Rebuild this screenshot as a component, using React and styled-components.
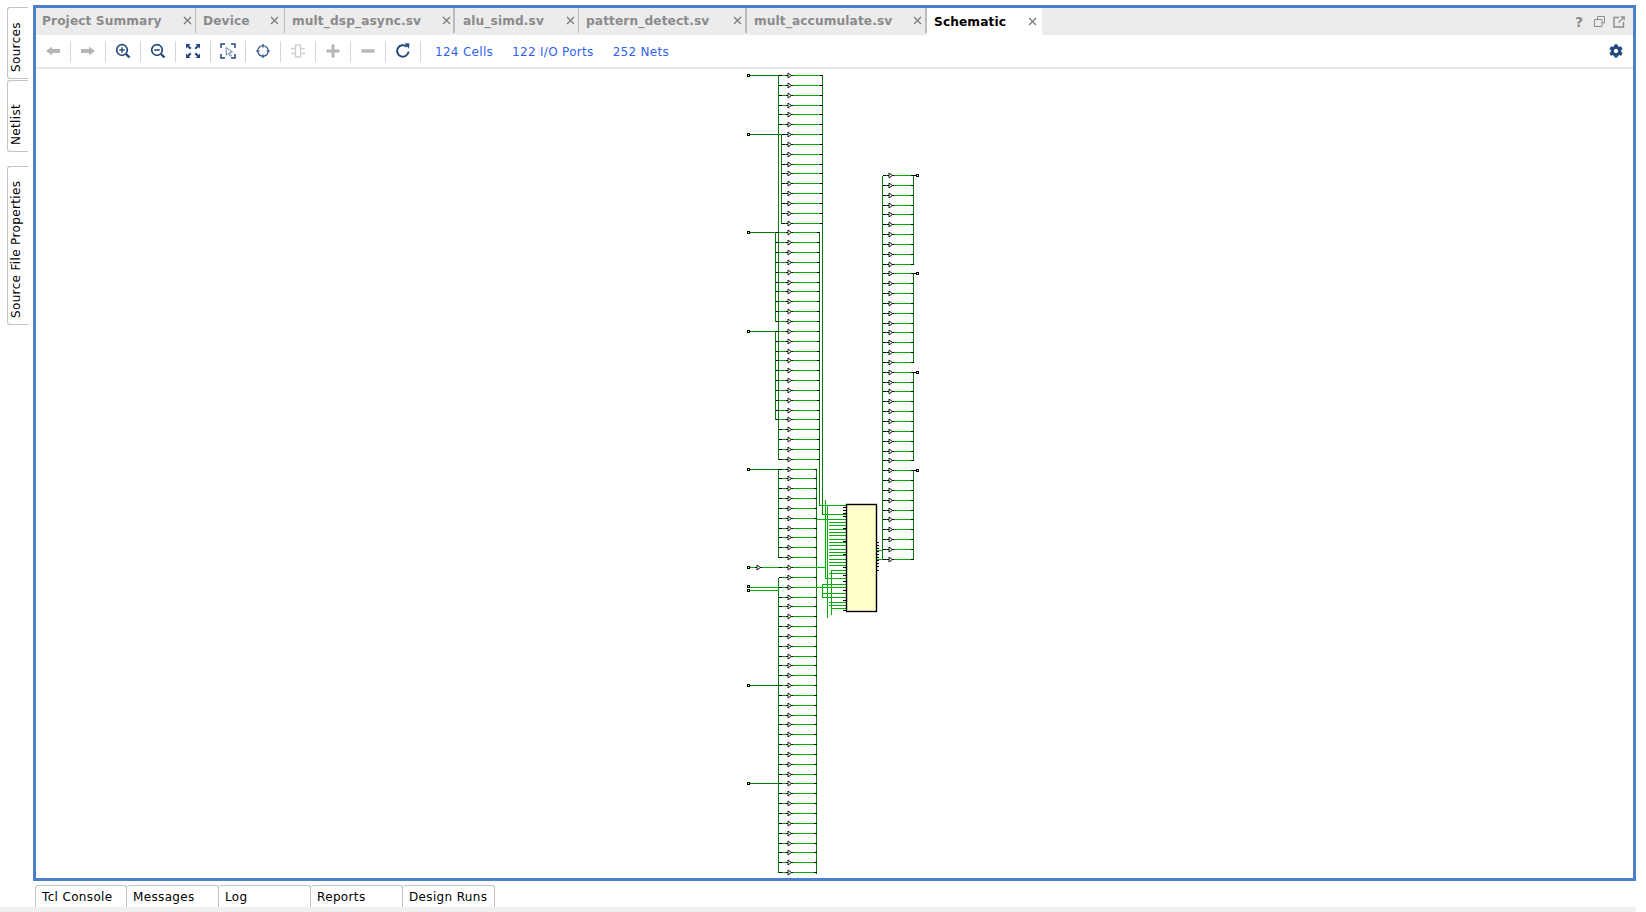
import React from 'react';
import styled, { createGlobalStyle } from 'styled-components';
import { FaCog } from 'react-icons/fa';

const GlobalStyle = createGlobalStyle`
  html, body {
    margin: 0;
    padding: 0;
    background: #fff;
    overflow: hidden;
    font-family: "DejaVu Sans", sans-serif;
  }
`;

const Page = styled.div`
  width: 1646px;
  height: 912px;
  display: grid;
  grid-template-columns: 33px 1603px;
  grid-template-rows: 881px 4px 22px 5px;
  background: #fff;
`;
const SideRail = styled.div`
  grid-row: 1 / 3;
  padding: 7px 0 0 7px;
  display: flex;
  flex-direction: column;
  align-items: stretch;
  width: 21px;
`;
const SideTab = styled.div`
  box-sizing: border-box;
  height: ${(p) => p.$h}px;
  margin-bottom: ${(p) => p.$gap}px;
  border: 1px solid #c4c4c4;
  border-left: none;
  border-radius: 0 3px 3px 0;
  writing-mode: vertical-rl;
  transform: rotate(180deg);
  display: flex;
  align-items: center;
  padding-top: 6px;
  padding-left: 4px;
  font-size: 12px;
  letter-spacing: 0.35px;
  color: #000;
`;
const Panel = styled.div`
  box-sizing: border-box;
  margin-top: 5px;
  height: 876px;
  border: 3px solid #4d7fd0;
  display: flex;
  flex-direction: column;
  background: #fff;
`;
const TabStrip = styled.div`
  height: 27px;
  background: #ececec;
  display: flex;
  flex: none;
`;
const Tab = styled.div`
  box-sizing: border-box;
  width: ${(p) => p.$w}px;
  height: ${(p) => (p.$active ? 27 : 25)}px;
  padding-left: ${(p) => p.$pad}px;
  padding-right: ${(p) => p.$end}px;
  display: flex;
  align-items: center;
  justify-content: space-between;
  font-size: 12.2px;
  font-weight: bold;
  letter-spacing: 0.1px;
  color: ${(p) => (p.$active ? '#000' : '#8a8a8a')};
  background: ${(p) => (p.$active ? '#fff' : 'transparent')};
  border-right: ${(p) => (p.$active ? 'none' : `${p.$sep}px solid #bcbcbc`)};
`;
const WindowTools = styled.div`
  margin-left: auto;
  padding-right: 4px;
  display: flex;
  align-items: center;
`;
const WindowTool = styled.div`
  width: 20px;
  display: flex;
  justify-content: center;
  color: #8c8c8c;
  font-size: 14px;
  font-weight: bold;
`;
const Toolbar = styled.div`
  height: 32px;
  flex: none;
  display: flex;
  align-items: center;
  border-bottom: 2px solid #e6e6e6;
`;
const ToolButton = styled.div`
  box-sizing: border-box;
  width: 35px;
  height: 21px;
  display: flex;
  align-items: center;
  justify-content: center;
  border-right: 1px solid #d4d4d4;
`;
const Links = styled.div`
  display: flex;
  gap: 19px;
  padding: 1px 0 0 14px;
`;
const StatLink = styled.span`
  color: #2f62f5;
  font-size: 12px;
  letter-spacing: 0.3px;
`;
const Settings = styled.div`
  margin-left: auto;
  padding-right: 10px;
  display: flex;
  color: #25497f;
  font-size: 14px;
`;
const Canvas = styled.div`
  flex: 1;
  display: flex;
  overflow: hidden;
`;
const BottomRail = styled.div`
  grid-column: 2;
  grid-row: 3;
  padding-left: 2px;
  display: flex;
`;
const BottomTab = styled.div`
  box-sizing: border-box;
  width: 92px;
  height: 22px;
  padding-left: 6px;
  border: 1px solid #c0c0c0;
  border-bottom: none;
  border-left-width: ${(p) => (p.$first ? 1 : 0)}px;
  border-radius: 3px 3px 0 0;
  display: flex;
  align-items: center;
  font-size: 12px;
  letter-spacing: 0.35px;
  color: #000;
`;
const BottomBand = styled.div`
  grid-column: 1 / 3;
  grid-row: 4;
  background: #f0f0f0;
`;

const tabs = [
  { label: 'Project Summary', w: 160, pad: 6, end: 3, sep: 1 },
  { label: 'Device', w: 89, pad: 7, end: 5, sep: 1 },
  { label: 'mult_dsp_async.sv', w: 170, pad: 7, end: 2, sep: 2 },
  { label: 'alu_simd.sv', w: 124, pad: 8, end: 3, sep: 1 },
  { label: 'pattern_detect.sv', w: 168, pad: 7, end: 3, sep: 2 },
  { label: 'mult_accumulate.sv', w: 180, pad: 7, end: 3, sep: 2 },
  { label: 'Schematic', w: 115, pad: 7, end: 5, sep: 0, active: true },
];

const NAVY = '#25497f';
const OFF = '#b6b6b6';

function Icon({ children }) {
  return (
    <svg width="18" height="18" viewBox="0 0 18 18" fill="none">
      {children}
    </svg>
  );
}

const toolIcons = [
  <Icon key="back"><path d="M2 9 8 4.5V7h8v4H8v2.5Z" fill={OFF} /></Icon>,
  <Icon key="fwd"><path d="M16 9 10 4.500V7H2v4h8v2.500Z" fill={OFF} /></Icon>,
  <Icon key="zin">
    <circle cx="8" cy="8" r="5.300" stroke={NAVY} strokeWidth="1.700" />
    <path d="M5.300 8h5.400M8 5.300v5.400" stroke={NAVY} strokeWidth="1.400" />
    <path d="M12 12l3.500 3.500" stroke={NAVY} strokeWidth="2.400" />
  </Icon>,
  <Icon key="zout">
    <circle cx="8" cy="8" r="5.300" stroke={NAVY} strokeWidth="1.700" />
    <path d="M5.300 8h5.400" stroke={NAVY} strokeWidth="1.600" />
    <path d="M12 12l3.500 3.500" stroke={NAVY} strokeWidth="2.400" />
  </Icon>,
  <Icon key="fit">
    <path d="M2 2h4.500L5 3.500 7.500 6 6 7.500 3.500 5 2 6.500ZM16 2v4.500L14.500 5 12 7.500 10.500 6 13 3.500 11.500 2ZM2 16v-4.500L3.500 13 6 10.500 7.500 12 5 14.500 6.500 16ZM16 16h-4.500L13 14.500 10.500 12 12 10.500 14.500 13 16 11.500Z" fill={NAVY} />
  </Icon>,
  <Icon key="area">
    <path d="M2 6V2h4M12 2h4v4M16 12v4h-4M6 16H2v-4" stroke={NAVY} strokeWidth="1.500" />
    <path d="M7 5.500l6.500 4.500-3 .6 2 3-1.300.8-1.900-3-2 1.800Z" fill="#fff" stroke="#6f86a8" strokeWidth="1" />
  </Icon>,
  <Icon key="target">
    <circle cx="9" cy="9" r="5.300" stroke={NAVY} strokeWidth="1.100" />
    <path d="M9 2v3.500M9 12.500V16M2 9h3.500M12.500 9H16" stroke={NAVY} strokeWidth="1.200" />
  </Icon>,
  <Icon key="chip">
    <path d="M6.500 3h5v12h-5Z" stroke="#cfcfcf" strokeWidth="1.400" />
    <path d="M2 6.500h4.500M2 11.500h4.500M11.500 6.500H16M11.500 11.500H16" stroke="#cfcfcf" strokeWidth="1.400" />
  </Icon>,
  <Icon key="plus"><path d="M9 2.500v13M2.500 9h13" stroke={OFF} strokeWidth="3" /></Icon>,
  <Icon key="minus"><path d="M2.500 9h13" stroke={OFF} strokeWidth="3.400" /></Icon>,
  <Icon key="refresh">
    <path d="M14.500 9.500A5.700 5.700 0 1 1 12.600 4.700" stroke={NAVY} strokeWidth="2" />
    <path d="M10.500 1.200l5 .2-.6 5.400Z" fill={NAVY} />
  </Icon>,
];

const BRIGHT = '#00b000';
const DARK = '#067a06';
const BLACK = '#000';

const rowY = (i) => Math.round(75 + i * 9.84) + 0.5;
const rightY = (i) => Math.round(175 + i * 9.84) + 0.5;

function Wire({ d, color = BRIGHT }) {
  return <path d={d} stroke={color} strokeWidth="1" fill="none" shapeRendering="crispEdges" />;
}

function Buffer({ x, y }) {
  return (
    <g shapeRendering="crispEdges">
      <path d={`M${x - 3} ${y}h2M${x + 2} ${y}h2`} stroke={BLACK} />
      <path d={`M${x - 1} ${y - 2.500}L${x + 2.500} ${y}L${x - 1} ${y + 2.500}Z`} fill="#fff" stroke={BLACK} strokeWidth="0.900" shapeRendering="auto" />
    </g>
  );
}

function Port({ x, y }) {
  return <rect x={x + 0.5} y={y - 1} width="2" height="2" fill="#fff" stroke={BLACK} shapeRendering="crispEdges" />;
}

function leftBus(i) {
  if (i <= 5) return 778.5;
  if (i <= 15) return 781.5;
  if (i <= 35) return 775.5;
  return 778.5;
}
function rightBus(i) {
  if (i <= 15) return 822.5;
  if (i <= 39) return 819.5;
  return 816.5;
}

const leftPorts = [0, 6, 16, 26, 40, 50, 62, 72];
const chipWires = [
  [505.5, 819.5], [514.5, 822.5], [519.5, 816.5], [522.5, 828.5], [525.5, 828.5], [529.5, 828.5],
  [532.5, 828.5], [535.5, 828.5], [539.5, 828.5], [542.5, 828.5], [545.5, 828.5], [549.5, 828.5],
  [552.5, 828.5], [555.5, 828.5], [559.5, 828.5], [562.5, 828.5], [565.5, 828.5], [570.5, 831.5],
  [573.5, 828.5], [578.5, 825.5], [584.5, 822.5], [587.5, 816.5], [593.5, 822.5], [597.5, 822.5],
  [602.5, 828.5], [605.5, 828.5], [608.5, 831.5],
];
const leftPins = [507, 510, 513, 516, 528, 541, 554, 567, 575, 581, 590, 600, 610];
const rightPins = [542, 545, 548, 551, 554, 557, 560, 563, 566, 570];

function Schematic() {
  const rows = [];
  for (let i = 0; i < 82; i++) {
    const y = rowY(i);
    const l = leftBus(i);
    const r = rightBus(i);
    rows.push(
      <g key={`l${i}`}>
        <Wire d={`M${l + 3} ${y}H${r - 3}`} />
        <Wire d={`M${l} ${y}h3M${r - 3} ${y}h3`} color={BLACK} />
        <Buffer x={789} y={y} />
      </g>
    );
  }
  const right = [];
  for (let i = 0; i < 40; i++) {
    const y = rightY(i);
    right.push(
      <g key={`r${i}`}>
        <Wire d={`M885.5 ${y}H910.5`} />
        <Wire d={`M882.5 ${y}h3M910.5 ${y}h3`} color={BLACK} />
        <Buffer x={890} y={y} />
      </g>
    );
  }
  return (
    <svg width="1597" height="809" viewBox="36 69 1597 809">
      {/* left stack buses */}
      <Wire color={DARK} d={`M778.5 ${rowY(0)}V${rowY(39)}`} />
      <Wire color={DARK} d={`M781.500 ${rowY(6)}V${rowY(15)}`} />
      <Wire color={DARK} d={`M775.500 ${rowY(16)}V${rowY(25)}M775.500 ${rowY(26)}V${rowY(35)}`} />
      <Wire color={DARK} d={`M778.5 ${rowY(40)}V${rowY(49)}M778.5 ${rowY(51)}V873`} />
      <Wire color={DARK} d={`M822.500 ${rowY(0)}V514.500M819.500 ${rowY(16)}V505.500`} />
      <Wire color={DARK} d={`M816.500 ${rowY(40)}V874`} />
      {leftPorts.map((i) => (
        <g key={i}>
          <Wire color={i === 50 ? BRIGHT : DARK} d={`M750 ${rowY(i)}H${i === 50 ? 786 : leftBus(i)}`} />
          <Port x={747} y={rowY(i)} />
        </g>
      ))}
      <Buffer x={758} y={rowY(50)} />
      <Wire d={`M750 587.500H785M750 590.500H778.500`} />
      <Port x={747} y={586.500} />
      <Port x={747} y={590.500} />
      {rows}

      {/* wiring into the block */}
      {chipWires.map(([y, x]) => (
        <Wire key={y} d={`M${x} ${y}H846`} />
      ))}
      <Wire d={`M825.500 500V578.500M827.500 505V618M831.500 570V615M822.500 584V598`} />
      <Wire d={`M793 567.500H825.500M793 587.500H846`} />
      {leftPins.map((y) => (
        <Wire key={y} color={BLACK} d={`M843 ${y + 0.5}h3`} />
      ))}

      {/* the block */}
      <rect x="846.500" y="504.500" width="30" height="107" fill="#ffffcc" stroke={BLACK} strokeWidth="1.400" />
      {rightPins.map((y) => (
        <Wire key={y} color={BLACK} d={`M877 ${y + 0.5}h2`} />
      ))}
      <Wire d="M877 550.500H882.500M877 559.500H882.500" />

      {/* right stack */}
      <Wire color={DARK} d={`M882.500 ${rightY(0)}V${rightY(39)}`} />
      {[0, 10, 20, 30].map((i) => (
        <g key={i}>
          <Wire color={DARK} d={`M913.500 ${rightY(i)}V${rightY(i + 9)}`} />
          <Wire color={BLACK} d={`M913.500 ${rightY(i)}h3`} />
          <Port x={916} y={rightY(i)} />
        </g>
      ))}
      {right}
    </svg>
  );
}

export default function App() {
  return (
    <>
      <GlobalStyle />
      <Page>
        <SideRail>
          <SideTab $h={72} $gap={1}>Sources</SideTab>
          <SideTab $h={72} $gap={14}>Netlist</SideTab>
          <SideTab $h={159} $gap={0}>Source File Properties</SideTab>
        </SideRail>
        <Panel>
          <TabStrip>
            {tabs.map((t) => (
              <Tab key={t.label} $w={t.w} $pad={t.pad} $end={t.end} $sep={t.sep} $active={t.active}>
                <span>{t.label}</span>
                <svg width="9" height="9" viewBox="0 0 9 9">
                  <path d="M1 1l7 7M8 1L1 8" stroke="#777" strokeWidth="1.200" />
                </svg>
              </Tab>
            ))}
            <WindowTools>
              <WindowTool>?</WindowTool>
              <WindowTool>
                <svg width="11" height="11" viewBox="0 0 11 11" fill="none" stroke="#8c8c8c">
                  <path d="M3.500 3V.5h7V7H8M.5 3.500h7.500v7H.5Z" />
                </svg>
              </WindowTool>
              <WindowTool>
                <svg width="12" height="12" viewBox="0 0 12 12" fill="none" stroke="#8c8c8c">
                  <path d="M6 1.500H1v9.500h9.500V6" strokeWidth="1.400" />
                  <path d="M5.500 6.500 11 1M7.500 .8H11.200V4.500" strokeWidth="1.200" />
                </svg>
              </WindowTool>
            </WindowTools>
          </TabStrip>
          <Toolbar>
            {toolIcons.map((icon) => (
              <ToolButton key={icon.key}>{icon}</ToolButton>
            ))}
            <Links>
              <StatLink>124 Cells</StatLink>
              <StatLink>122 I/O Ports</StatLink>
              <StatLink>252 Nets</StatLink>
            </Links>
            <Settings>
              <FaCog />
            </Settings>
          </Toolbar>
          <Canvas>
            <Schematic />
          </Canvas>
        </Panel>
        <BottomRail>
          {['Tcl Console', 'Messages', 'Log', 'Reports', 'Design Runs'].map((label, i) => (
            <BottomTab key={label} $first={i === 0}>{label}</BottomTab>
          ))}
        </BottomRail>
        <BottomBand />
      </Page>
    </>
  );
}
